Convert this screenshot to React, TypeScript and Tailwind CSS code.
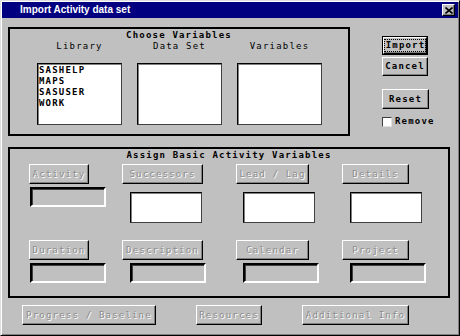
import React from 'react';

const mono = "font-['DejaVu_Sans_Mono',monospace] text-[9px] tracking-[1.2px]";
const raised =
  'border border-t-white border-l-white border-r-black border-b-black shadow-[inset_-1px_-1px_0_#808080] bg-[#c0c0c0]';
const dimText = 'text-[#8c8c8c] [text-shadow:1px_1px_0_#ffffff]';

interface BtnProps {
  label: string;
  className: string;
  disabled?: boolean;
}

const Btn: React.FC<BtnProps> = ({ label, className, disabled }) => (
  <div
    className={`flex items-center justify-center ${raised} ${mono} leading-[11px] ${
      disabled ? dimText : 'font-bold text-black'
    } ${className}`}
  >
    {label}
  </div>
);

const GrayField = () => (
  <div className="mt-[3px] ml-[1px] h-[20px] w-[76px] border-2 border-t-black border-l-black border-r-white border-b-white bg-[#c0c0c0] shadow-[inset_1px_1px_0_#404040]" />
);

const WhiteField = () => (
  <div className="mt-[8px] h-[31px] w-[72px] border border-t-black border-l-black border-r-[#404040] border-b-[#404040] bg-white shadow-[inset_1px_1px_0_#808080]" />
);

const lists = [
  { title: 'Library', items: ['SASHELP', 'MAPS', 'SASUSER', 'WORK'] },
  { title: 'Data Set', items: [] as string[] },
  { title: 'Variables', items: [] as string[] },
];

const CloseBox = () => (
  <div className={`flex h-[12px] w-[13px] items-center justify-center ${raised}`}>
    <svg width="8" height="7" viewBox="0 0 8 7">
      <path d="M0.5 0.5 L7.5 6.5 M7.5 0.5 L0.5 6.5" stroke="#000" strokeWidth="1.6" />
    </svg>
  </div>
);

const App: React.FC = () => {
  return (
    <div className="h-[336px] w-[460px] overflow-hidden bg-[#c0c0c0]">
      <div className="flex h-full w-full flex-col border border-t-[#dfdfdf] border-l-[#dfdfdf] border-r-black border-b-black p-[1px] shadow-[inset_1px_1px_0_#ffffff,inset_-1px_-1px_0_#808080]">
        {/* title bar */}
        <div className="flex h-[16px] items-center justify-between bg-[#000080] pl-[18px] pr-[3px]">
          <span className="font-['Liberation_Sans',Arial,sans-serif] text-[10px] font-bold leading-[16px] text-white">
            Import Activity data set
          </span>
          <CloseBox />
        </div>

        <div className="flex items-start">
          {/* Choose Variables group */}
          <div className={`ml-[6px] mt-[9px] h-[109px] w-[342px] border-2 border-black text-black ${mono}`}>
            <div className="pt-[1px] text-center font-bold leading-[10.5px]">Choose Variables</div>
            <div className="grid grid-cols-[100px_100px_100px] pl-[27px]">
              {lists.map((l) => (
                <div key={l.title} className="flex w-[85px] flex-col">
                  <div className="text-center leading-[10.5px]">{l.title}</div>
                  <div className="mt-[12px] h-[62px] w-[85px] border border-t-black border-l-black border-r-[#404040] border-b-[#404040] bg-white pl-[1px] pt-[1px] shadow-[inset_1px_1px_0_#808080]">
                    {l.items.map((it) => (
                      <div key={it} className="font-bold leading-[11px]">
                        {it}
                      </div>
                    ))}
                  </div>
                </div>
              ))}
            </div>
          </div>

          {/* right buttons */}
          <div className="ml-[32px] flex flex-col pt-[18px]">
            <div className="h-[19px] w-[46px] border border-black">
              <div className={`flex h-full w-full items-center justify-center ${raised}`}>
                <span className={`border border-dotted border-black pl-[1px] font-bold leading-[11px] text-black ${mono}`}>
                  Import
                </span>
              </div>
            </div>
            <Btn label="Cancel" className="mt-[2px] h-[19px] w-[46px]" />
            <Btn label="Reset" className="mt-[13px] h-[20px] w-[47px]" />
            <div className="mt-[7px] flex items-center gap-[3px]">
              <div className="h-[10px] w-[10px] border border-t-[#404040] border-l-[#404040] border-r-[#dfdfdf] border-b-[#dfdfdf] bg-white" />
              <span className={`font-bold leading-[11px] text-black ${mono}`}>Remove</span>
            </div>
          </div>
        </div>

        {/* Assign Basic Activity Variables group */}
        <div className={`ml-[6px] mt-[11px] h-[151px] w-[442px] border-2 border-black ${mono}`}>
          <div className="pt-[1px] text-center font-bold leading-[11px] text-black">
            Assign Basic Activity Variables
          </div>
          <div className="mt-[3px] grid grid-cols-[93px_114px_106px_auto] gap-y-[17px] pl-[19px]">
            <div className="flex flex-col">
              <Btn label="Activity" disabled className="h-[20px] w-[60px]" />
              <GrayField />
            </div>
            <div className="flex flex-col">
              <Btn label="Successors" disabled className="h-[20px] w-[81px]" />
              <div className="ml-[8px]">
                <WhiteField />
              </div>
            </div>
            <div className="flex flex-col">
              <Btn label="Lead / Lag" disabled className="h-[20px] w-[73px]" />
              <div className="ml-[7px]">
                <WhiteField />
              </div>
            </div>
            <div className="flex flex-col">
              <Btn label="Details" disabled className="h-[20px] w-[67px]" />
              <div className="ml-[8px]">
                <WhiteField />
              </div>
            </div>

            <div className="flex flex-col">
              <Btn label="Duration" disabled className="h-[20px] w-[60px]" />
              <GrayField />
            </div>
            <div className="flex flex-col">
              <Btn label="Description" disabled className="h-[20px] w-[81px]" />
              <div className="ml-[7px]">
                <GrayField />
              </div>
            </div>
            <div className="flex flex-col">
              <Btn label="Calendar" disabled className="h-[20px] w-[73px]" />
              <div className="ml-[6px]">
                <GrayField />
              </div>
            </div>
            <div className="flex flex-col">
              <Btn label="Project" disabled className="h-[20px] w-[67px]" />
              <div className="ml-[7px]">
                <GrayField />
              </div>
            </div>
          </div>
        </div>

        {/* bottom buttons */}
        <div className="mt-[7px] flex">
          <Btn label="Progress / Baseline" disabled className="ml-[20px] h-[20px] w-[134px]" />
          <Btn label="Resources" disabled className="ml-[40px] h-[20px] w-[66px]" />
          <Btn label="Additional Info" disabled className="ml-[40px] h-[20px] w-[107px]" />
        </div>
      </div>
    </div>
  );
};

export default App;
